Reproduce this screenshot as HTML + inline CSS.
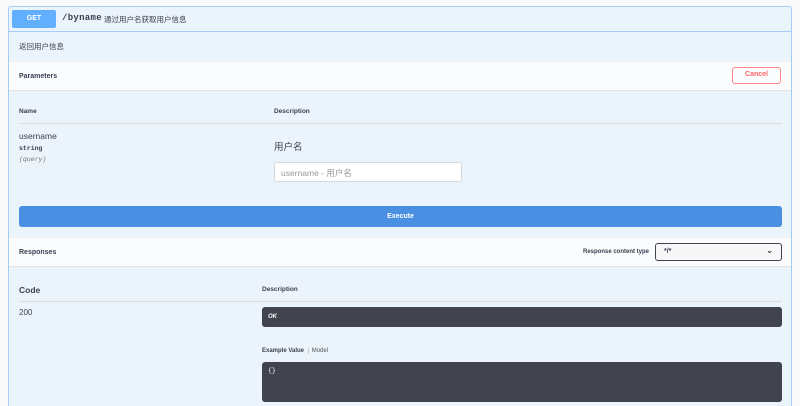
<!DOCTYPE html>
<html style="overflow:hidden;height:406px"><head><meta charset="utf-8"><style>
*{box-sizing:border-box;margin:0;padding:0}
body{width:800px;height:406px;background:#f9f9f9;font-family:"Liberation Sans","Noto Sans CJK SC",sans-serif;color:#3b4151;position:relative;overflow:hidden}
.panel{position:absolute;left:8px;top:6px;width:784px;height:410px;background:#ebf3fb;border:1px solid #a5cdf5;border-radius:3px}
.a{position:absolute}
.hdr{left:0;top:0;width:782px;height:25px;border-bottom:1px solid #a5cdf5}
.get{left:3px;top:3px;width:44px;height:18px;background:#61affe;color:#fff;font-size:7px;font-weight:bold;text-align:center;line-height:18px;border-radius:2px}
.bar{left:0;width:782px;height:28px;background:#fafcfd;box-shadow:0 1px 1px rgba(0,0,0,.08)}
.b{font-weight:bold;font-size:7px}
.dark{background:#41444e;border-radius:3px}
</style></head><body>
<div class="panel">
 <div class="a hdr">
  <div class="a get">GET</div>
  <div class="a" style="left:53px;top:6px;font-family:'Liberation Mono',monospace;font-size:9px;font-weight:bold;color:#3b4151;letter-spacing:0.3px">/byname</div>
  <div class="a" style="left:95px;top:7px;font-size:7.5px">通过用户名获取用户信息</div>
 </div>
 <div class="a" style="left:10px;top:34px;font-size:7.5px">返回用户信息</div>
 <div class="a bar" style="top:55px"><div class="a b" style="left:10px;top:11px">Parameters</div>
  <div class="a" style="left:723px;top:5px;width:49px;height:17px;border:1.5px solid #f88;border-radius:3px;color:#f66;font-size:7px;font-weight:bold;text-align:center;line-height:14px">Cancel</div></div>
 <div class="a b" style="left:10px;top:101px;font-size:6.5px">Name</div>
 <div class="a b" style="left:265px;top:101px;font-size:6.5px">Description</div>
 <div class="a" style="left:10px;top:116px;width:763px;height:1px;background:#d8dde4"></div>
 <div class="a" style="left:10px;top:124px;font-size:8.5px">username</div>
 <div class="a" style="left:10px;top:138px;font-size:6.5px;font-family:'Liberation Mono',monospace;font-weight:bold">string</div>
 <div class="a" style="left:10px;top:149px;font-size:6.5px;font-family:'Liberation Mono',monospace;font-style:italic;color:#777">(query)</div>
 <div class="a" style="left:265px;top:132px;font-size:9.5px">用户名</div>
 <div class="a" style="left:265px;top:155px;width:188px;height:20px;background:#fff;border:1px solid #d9d9d9;border-radius:3px;font-size:8.5px;color:#999;padding:4px 0 0 6px">username - 用户名</div>
 <div class="a" style="left:10px;top:199px;width:763px;height:21px;background:#4990e2;border-radius:3px;color:#fff;font-size:7px;font-weight:bold;text-align:center;line-height:21px">Execute</div>
 <div class="a bar" style="top:231px"><div class="a b" style="left:10px;top:11px">Responses</div>
  <div class="a b" style="left:574px;top:11px;font-size:6px">Response content type</div>
  <div class="a" style="left:646px;top:5px;width:127px;height:18px;border:1.5px solid #41444e;border-radius:3px;background:#f7f7f7;font-size:7px;font-weight:bold;padding:4px 0 0 8px">*/*<span style="position:absolute;right:8px;top:2px;font-size:8px">⌄</span></div></div>
 <div class="a" style="left:10px;top:278px;font-size:8.5px;font-weight:bold">Code</div>
 <div class="a b" style="left:253px;top:279px;font-size:6.5px">Description</div>
 <div class="a" style="left:10px;top:294px;width:763px;height:1px;background:#d8dde4"></div>
 <div class="a" style="left:10px;top:301px;font-size:8px">200</div>
 <div class="a dark" style="left:253px;top:300px;width:520px;height:20px"><span class="a" style="left:6px;top:7px;color:#fff;font-size:6px;font-weight:bold;font-style:italic">OK</span></div>
 <div class="a" style="left:253px;top:341px;font-size:6px"><b>Example Value</b> <span style="border-left:1px solid #ccc;padding-left:3px;margin-left:2px;color:#555">Model</span></div>
 <div class="a dark" style="left:253px;top:355px;width:520px;height:40px"><span class="a" style="left:6px;top:5px;color:#fff;font-size:6.5px;font-family:'Liberation Mono',monospace">{}</span></div>
</div>
</body></html>
